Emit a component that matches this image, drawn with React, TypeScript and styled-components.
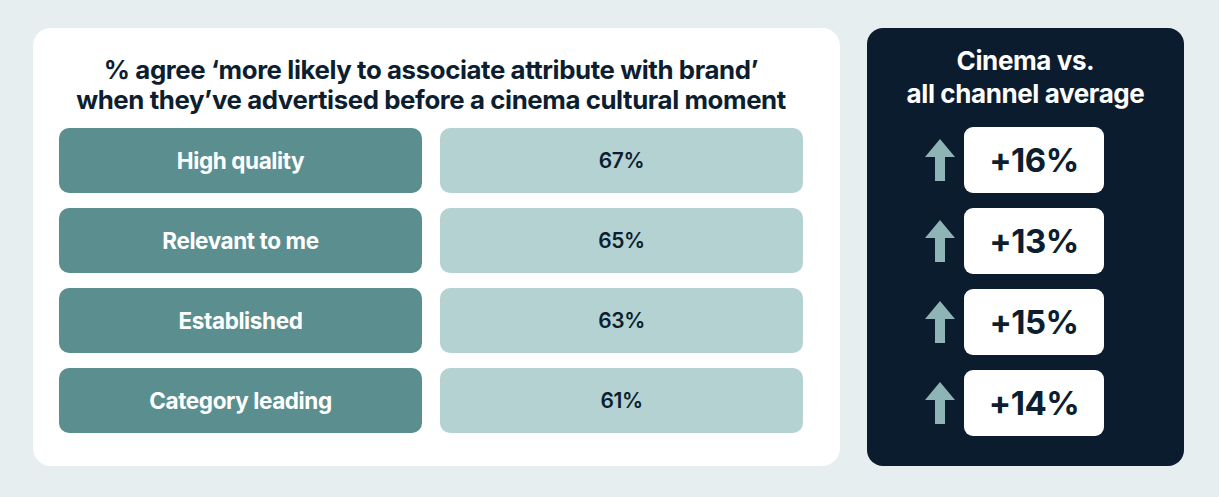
import React from "react";
import styled, { createGlobalStyle } from "styled-components";

const Global = createGlobalStyle`
  html, body { margin: 0; padding: 0; background: #e6eeef; }
  body { font-family: Inter, "Noto Sans", sans-serif; }
`;

const Page = styled.div`
  display: flex;
  gap: 27px;
  padding: 28px 0 0 33px;
  width: 1219px;
  height: 497px;
  box-sizing: border-box;
`;

const ChartCard = styled.section`
  width: 807px;
  height: 438px;
  box-sizing: border-box;
  background: #ffffff;
  border-radius: 18px;
  padding: 27px 37px 0 26px;
  display: flex;
  flex-direction: column;
`;

const ChartTitle = styled.h1`
  margin: 0 0 13px;
  font-size: 25.8px;
  line-height: 30px;
  font-weight: 700;
  letter-spacing: -0.4px;
  color: #0c1e2f;
  text-align: center;
`;

const Rows = styled.div`
  display: grid;
  grid-template-columns: 363px 363px;
  column-gap: 18px;
  row-gap: 15px;
`;

const Cell = styled.div<{ $variant: "label" | "value" }>`
  height: 65px;
  border-radius: 10px;
  display: flex;
  align-items: center;
  justify-content: center;
  font-size: ${(p) => (p.$variant === "label" ? "22.5px" : "21px")};
  letter-spacing: -0.4px;
  font-weight: ${(p) => (p.$variant === "label" ? 700 : 600)};
  background: ${(p) => (p.$variant === "label" ? "#5b8f8f" : "#b5d2d3")};
  color: ${(p) => (p.$variant === "label" ? "#ffffff" : "#0c1e2f")};
`;

const SideCard = styled.aside`
  width: 317px;
  height: 438px;
  box-sizing: border-box;
  background: #0b1c2e;
  border-radius: 16px;
  padding: 16px 0 0 58px;
  display: flex;
  flex-direction: column;
`;

const SideTitle = styled.h2`
  margin: 0 0 17px -58px;
  font-size: 26px;
  line-height: 33px;
  font-weight: 700;
  letter-spacing: -0.4px;
  color: #ffffff;
  text-align: center;
`;

const Lifts = styled.div`
  display: flex;
  flex-direction: column;
  gap: 15px;
`;

const LiftRow = styled.div`
  display: flex;
  align-items: center;
  gap: 9px;
`;

const LiftBox = styled.div`
  width: 140px;
  height: 66px;
  border-radius: 9px;
  background: #ffffff;
  display: flex;
  align-items: center;
  justify-content: center;
  font-size: 33px;
  font-weight: 700;
  letter-spacing: -0.5px;
  color: #0c1e2f;
`;

const UpArrow = () => (
  <svg width="30" height="42" viewBox="0 0 30 42" aria-hidden="true">
    <path d="M15 0 L30 18 L20 18 L20 42 L10 42 L10 18 L0 18 Z" fill="#8fb4b5" />
  </svg>
);

const data = [
  { label: "High quality", value: "67%", lift: "+16%" },
  { label: "Relevant to me", value: "65%", lift: "+13%" },
  { label: "Established", value: "63%", lift: "+15%" },
  { label: "Category leading", value: "61%", lift: "+14%" },
];

export default function App() {
  return (
    <>
      <Global />
      <Page>
        <ChartCard>
          <ChartTitle>
            % agree ‘more likely to associate attribute with brand’
            <br />
            when they’ve advertised before a cinema cultural moment
          </ChartTitle>
          <Rows>
            {data.map((d) => (
              <React.Fragment key={d.label}>
                <Cell $variant="label">{d.label}</Cell>
                <Cell $variant="value">{d.value}</Cell>
              </React.Fragment>
            ))}
          </Rows>
        </ChartCard>
        <SideCard>
          <SideTitle>
            Cinema vs.
            <br />
            all channel average
          </SideTitle>
          <Lifts>
            {data.map((d) => (
              <LiftRow key={d.lift}>
                <UpArrow />
                <LiftBox>{d.lift}</LiftBox>
              </LiftRow>
            ))}
          </Lifts>
        </SideCard>
      </Page>
    </>
  );
}
